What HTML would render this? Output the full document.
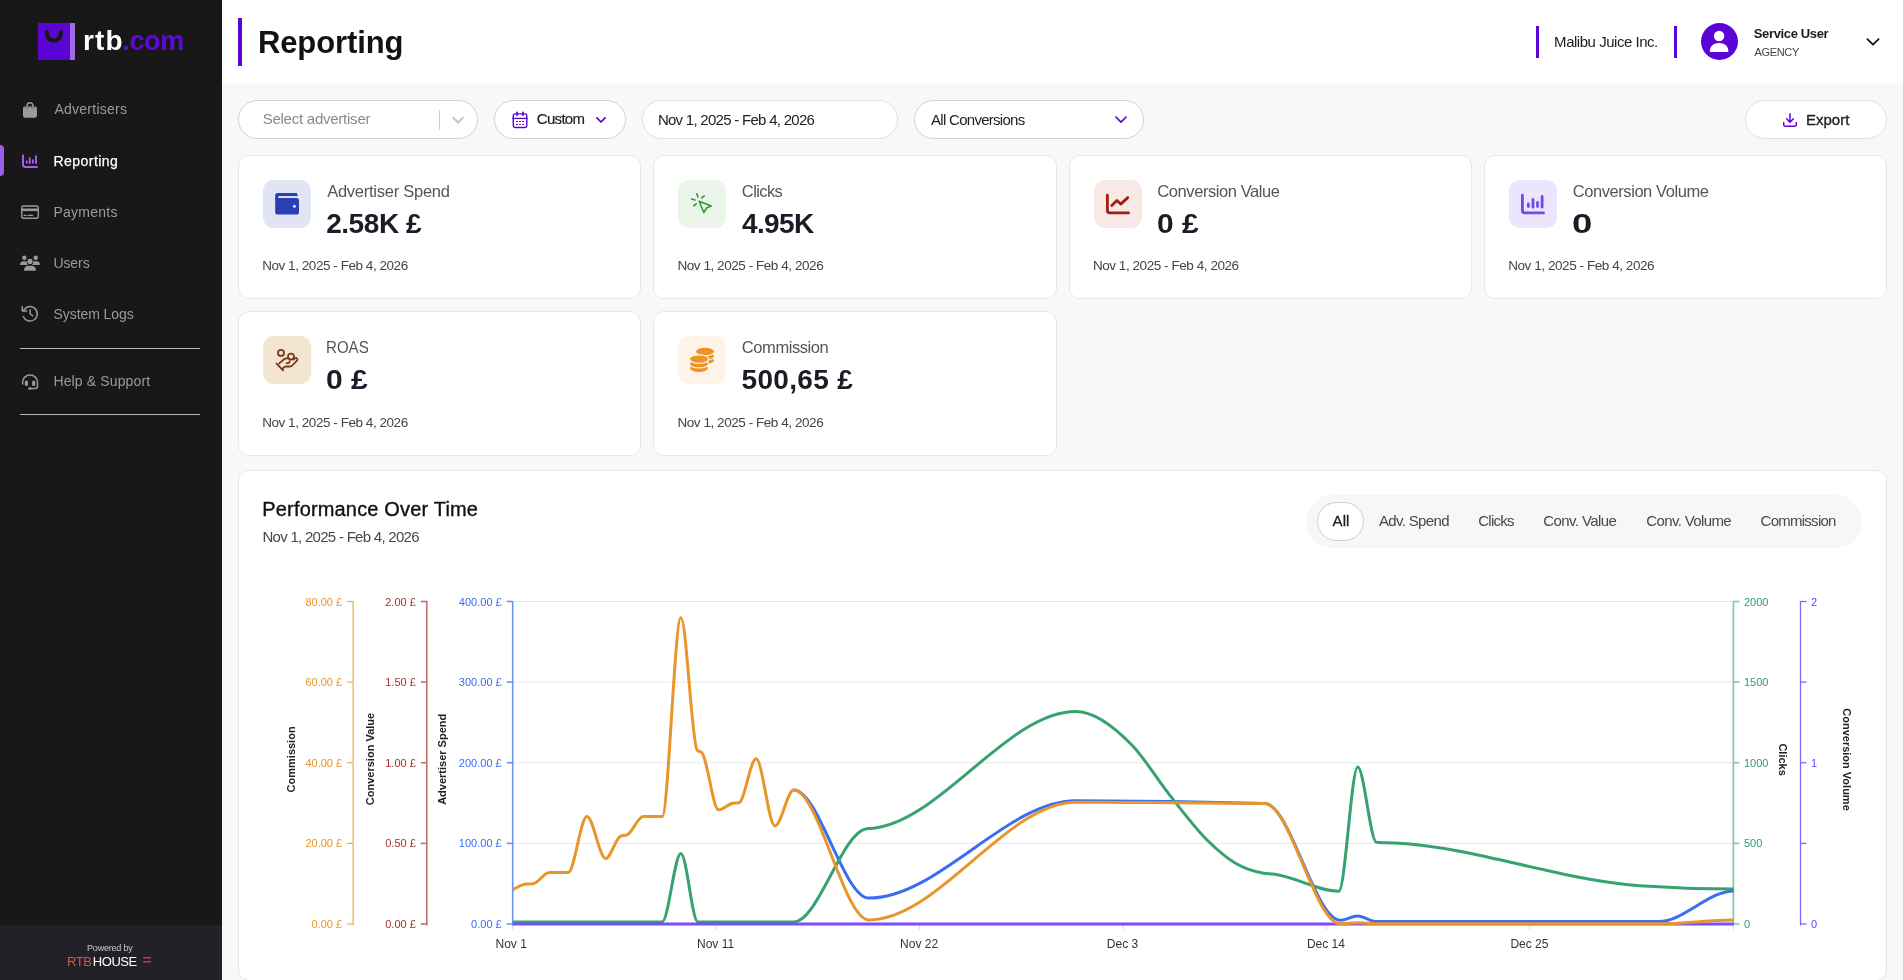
<!DOCTYPE html>
<html lang="en">
<head>
<meta charset="utf-8">
<title>Reporting - rtb.com</title>
<style>
*{box-sizing:border-box;margin:0;padding:0}
html,body{width:1903px;height:980px;overflow:hidden;background:#f8f8f8;font-family:"Liberation Sans",sans-serif}
#app{position:relative;width:1903px;height:980px;overflow:hidden;background:#f8f8f8}
.abs{position:absolute}
.t{position:absolute;white-space:pre;display:block}
.sidebar{position:absolute;left:0;top:0;width:222px;height:980px;background:#181818}
.sidebar .foot{position:absolute;left:0;top:925px;width:222px;height:55px;background:#212127}
.sidebar .active{position:absolute;left:-4px;top:145px;width:8px;height:31px;border-radius:4px;background:#9e5ee8}
.sidebar hr{position:absolute;left:20px;width:180px;height:1px;border:0;background:#b9b9b9}
.topbar{position:absolute;left:222px;top:0;width:1681px;height:84px;background:#fff}
.vbar{position:absolute;background:#5b04d6}
.pill{position:absolute;top:100px;height:39px;border:1px solid #d2d2d2;border-radius:20px;background:#fff}
.card{position:absolute;background:#fff;border:1px solid #e6e8e8;border-radius:11px}
.ibox{position:absolute;left:24px;top:24px;width:48px;height:48px;border-radius:11px}
.tabs{position:absolute;left:1306px;top:495px;width:556px;height:53px;border-radius:27px;background:#f6f7f7}
.tab-on{position:absolute;left:1317px;top:502px;width:47px;height:39px;border-radius:20px;background:#fff;border:1px solid #cfcfcf}
svg{position:absolute;overflow:visible}
svg.chart{left:0;top:0;will-change:transform}
</style>
</head>
<body>
<div id="app">

<!-- ============ SIDEBAR ============ -->
<aside class="sidebar">
  <svg style="left:0;top:0" width="222" height="90" viewBox="0 0 222 90">
    <rect x="38" y="23" width="37" height="37" fill="#5b04d6"/>
    <rect x="70" y="23" width="5" height="37" fill="#a06ae6"/>
    <path d="M46.9 32.2V33.7A6.95 6.95 0 0 0 60.8 33.7V32.2" fill="none" stroke="#181818" stroke-width="4.3" stroke-linecap="round"/>
  </svg>
  <div class="active"></div>
  <svg id="navicons" style="left:0;top:0" width="222" height="420" viewBox="0 0 222 420">
    
    <!-- bag -->
    <path d="M24.6 106.6H35.4A1.6 1.6 0 0 1 37 108.2V115.4A2.4 2.4 0 0 1 34.6 117.8H25.4A2.4 2.4 0 0 1 23 115.4V108.2A1.6 1.6 0 0 1 24.6 106.6Z" fill="#9a9a9a"/>
    <path d="M27.1 109.4V105.6A2.9 2.9 0 0 1 32.9 105.6V109.4" fill="none" stroke="#9a9a9a" stroke-width="1.5" stroke-linecap="round"/>
    <path d="M26.1 108.4V107.2M28.1 108.4V107.2M31.9 108.4V107.2M33.9 108.4V107.2" stroke="#181818" stroke-width="0.5"/>
    <!-- reporting chart -->
    <path d="M23 155.3V164.6A2.4 2.4 0 0 0 25.4 167H37" fill="none" stroke="#a65cf0" stroke-width="2" stroke-linecap="round"/>
    <path d="M26.8 161.4V162.8M29.8 158.2V163M32.9 160.2V162.8M36 156.1V163.1" fill="none" stroke="#a65cf0" stroke-width="1.9" stroke-linecap="round"/>
    <!-- credit card -->
    <rect x="21.7" y="206" width="16.6" height="12.3" rx="2" fill="none" stroke="#9a9a9a" stroke-width="1.4"/>
    <rect x="21.7" y="208.5" width="16.6" height="2.6" fill="#9a9a9a"/>
    <path d="M24.2 215.4H26.2M28.2 215.4H32.6" stroke="#9a9a9a" stroke-width="1.4" stroke-linecap="round"/>
    <!-- users -->
    <circle cx="24.3" cy="257.7" r="2.2" fill="#9a9a9a"/>
    <circle cx="35.7" cy="257.7" r="2.2" fill="#9a9a9a"/>
    <circle cx="30" cy="261.4" r="2.6" fill="#9a9a9a"/>
    <path d="M20 264.6C20 262.7 21.4 261.3 23.2 261.3H25.4C25.9 261.3 26.4 261.4 26.8 261.6C26.7 263 27.2 264.1 28 264.9H20.6C20.3 264.9 20 264.8 20 264.6Z" fill="#9a9a9a"/>
    <path d="M40 264.6C40 262.7 38.6 261.3 36.8 261.3H34.6C34.1 261.3 33.6 261.4 33.2 261.6C33.3 263 32.8 264.1 32 264.9H39.4C39.7 264.9 40 264.8 40 264.6Z" fill="#9a9a9a"/>
    <path d="M24 270C24 267.5 25.9 265.7 28.2 265.7H31.8C34.1 265.7 36 267.5 36 270C36 270.4 35.7 270.7 35.3 270.7H24.7C24.3 270.7 24 270.4 24 270Z" fill="#9a9a9a"/>
    <!-- history -->
    <path d="M23.6 310.6A7.2 7.2 0 1 1 23.3 316.4" fill="none" stroke="#9a9a9a" stroke-width="1.5" stroke-linecap="round"/>
    <path d="M22.3 306.6V310.9H26.6" fill="none" stroke="#9a9a9a" stroke-width="1.5" stroke-linecap="round" stroke-linejoin="round"/>
    <path d="M30.2 309.9V314L32.8 315.9" fill="none" stroke="#9a9a9a" stroke-width="1.5" stroke-linecap="round" stroke-linejoin="round"/>
    <!-- headset -->
    <path d="M22.6 384V382.4A7.45 7.45 0 0 1 37.5 382.4V385.9A2.6 2.6 0 0 1 34.9 388.5H31.4" fill="none" stroke="#9a9a9a" stroke-width="1.5" stroke-linecap="round"/>
    <rect x="24.8" y="380.4" width="3.2" height="5.7" rx="1.5" fill="#9a9a9a"/>
    <rect x="32.1" y="380.4" width="3.2" height="5.7" rx="1.5" fill="#9a9a9a"/>
    <ellipse cx="29.9" cy="388.5" rx="1.9" ry="1.3" fill="#9a9a9a"/>

  </svg>
  <hr style="top:348px">
  <hr style="top:414px">
  <div class="foot"></div>
  <svg style="left:0;top:925px" width="222" height="55" viewBox="0 925 222 55">
    <rect x="143.2" y="957.3" width="7.8" height="1.1" fill="#e2533c"/>
    <rect x="143.2" y="961.3" width="7.8" height="1.1" fill="#e2533c"/>
  </svg>
</aside>

<!-- ============ TOP BAR ============ -->
<header class="topbar">
  <div class="vbar" style="left:16px;top:18px;width:4px;height:48px"></div>
  <div class="vbar" style="left:1314px;top:26px;width:3px;height:32px"></div>
  <div class="vbar" style="left:1452px;top:26px;width:3px;height:32px"></div>
  <svg style="left:1479px;top:23px" width="37" height="37" viewBox="0 0 37 37">
    <circle cx="18.5" cy="18.5" r="18.5" fill="#5b04d6"/>
    <circle cx="18.1" cy="13.05" r="5.2" fill="#fff"/>
    <path d="M8.8 28.3C8.8 23.4 12.6 20 18.1 20C23.6 20 27.4 23.4 27.4 28.3Q27.4 29 26.7 29H9.5Q8.8 29 8.8 28.3Z" fill="#fff"/>
  </svg>
  <svg style="left:1644px;top:37px" width="14" height="10" viewBox="0 0 14 10">
    <path d="M1.4 2.1L7 7.7 12.6 2.1" fill="none" stroke="#111" stroke-width="1.7" stroke-linecap="round" stroke-linejoin="round"/>
  </svg>
</header>

<!-- ============ FILTERS ============ -->
<div class="pill" style="left:238px;width:240px"></div>
<div class="abs" style="left:439px;top:109.5px;width:1px;height:20px;background:#cfcfcf"></div>
<svg style="left:451px;top:115px" width="14" height="11" viewBox="0 0 14 11">
  <path d="M2.2 2.8L7 7.6 11.8 2.8" fill="none" stroke="#c4c4c4" stroke-width="2.1" stroke-linecap="round" stroke-linejoin="round"/>
</svg>
<div class="pill" style="left:494px;width:132px"></div>
<svg style="left:512px;top:111px" width="16" height="18" viewBox="0 0 16 18">
  
  <rect x="1.3" y="2.9" width="13.5" height="13.6" rx="1.9" fill="none" stroke="#5b04d6" stroke-width="1.4"/>
  <path d="M0.4 7.4H15.6" stroke="#5b04d6" stroke-width="1.3"/>
  <path d="M5 1.4V4.2M11 1.4V4.2" stroke="#5b04d6" stroke-width="1.7" stroke-linecap="round"/>
  <path d="M4.5 10.5H5.5M7.5 10.5H8.5M10.5 10.5H11.5M4.5 13.5H5.5M7.5 13.5H8.5M10.5 13.5H11.5" stroke="#5b04d6" stroke-width="1.15" stroke-linecap="round"/>

</svg>
<svg style="left:595px;top:116px" width="12" height="9" viewBox="0 0 12 9">
  <path d="M1.9 1.9L6 6 10.1 1.9" fill="none" stroke="#5b04d6" stroke-width="1.7" stroke-linecap="round" stroke-linejoin="round"/>
</svg>
<div class="pill" style="left:642px;width:256px;border-color:#e0e0e0"></div>
<div class="pill" style="left:914px;width:230px"></div>
<svg style="left:1114px;top:114.5px" width="14" height="10" viewBox="0 0 14 10">
  <path d="M1.9 2L7 7.1 12.1 2" fill="none" stroke="#5b04d6" stroke-width="1.7" stroke-linecap="round" stroke-linejoin="round"/>
</svg>
<div class="pill" style="left:1745px;width:142px;border-color:#dedede"></div>
<svg style="left:1782px;top:112px" width="16" height="16" viewBox="0 0 16 16">
  <path d="M8 1.8V10M4.6 6.8L8 10.2 11.4 6.8" fill="none" stroke="#5b04d6" stroke-width="1.5" stroke-linecap="round" stroke-linejoin="round"/>
  <path d="M1.7 10.6V12.4A1.8 1.8 0 0 0 3.5 14.2H12.5A1.8 1.8 0 0 0 14.3 12.4V10.6" fill="none" stroke="#5b04d6" stroke-width="1.5" stroke-linecap="round" stroke-linejoin="round"/>
</svg>

<!-- ============ CARDS ============ -->
<section class="card" style="left:238px;top:155px;width:403px;height:144px"><div class="ibox" style="background:#e1e4f2"></div></section>
<section class="card" style="left:653px;top:155px;width:404px;height:144px"><div class="ibox" style="background:#ebf5e9"></div></section>
<section class="card" style="left:1069px;top:155px;width:403px;height:144px"><div class="ibox" style="background:#f7e9e6"></div></section>
<section class="card" style="left:1484px;top:155px;width:403px;height:144px"><div class="ibox" style="background:#ebe6fd"></div></section>
<section class="card" style="left:238px;top:311px;width:403px;height:145px"><div class="ibox" style="background:#f2e5d2"></div></section>
<section class="card" style="left:653px;top:311px;width:404px;height:145px"><div class="ibox" style="background:#fef3e8"></div></section>
<svg id="cardicons" style="left:0;top:0" width="1903" height="460" viewBox="0 0 1903 460">
  
  <!-- wallet -->
  <path d="M275.2 198H296.4A2.6 2.6 0 0 1 299 200.6V212A2.6 2.6 0 0 1 296.4 214.6H277.8A2.6 2.6 0 0 1 275.2 212Z" fill="#2840b4"/>
  <path d="M275.2 199V195.7A2.6 2.6 0 0 1 277.8 193.1H296.9L297.9 196.3H278.4V199Z" fill="#2840b4"/>
  <path d="M279.3 197.15H297" stroke="#e1e4f2" stroke-width="1.7" stroke-linecap="round"/>
  <circle cx="294.4" cy="206.2" r="1.5" fill="#e1e4f2"/>
  <!-- click -->
  <path d="M699.2 201.3L711.2 205.9L706.6 207.9L703.8 212.5Z" fill="none" stroke="#2f9a2f" stroke-width="1.6" stroke-linejoin="round"/>
  <path d="M696.9 193.8L697.9 197M704.2 195.8L701.8 197.9M691.8 198.9L695 199.9M696.2 203.8L693.8 205.9" fill="none" stroke="#2f9a2f" stroke-width="1.6" stroke-linecap="round"/>
  <!-- chart line -->
  <path d="M1107.4 195.2V210.5A2.4 2.4 0 0 0 1109.8 212.9H1128.5" fill="none" stroke="#a02010" stroke-width="2.8" stroke-linecap="round"/>
  <path d="M1111.8 205.4L1116.9 200.4L1120.7 204.1L1127.8 197.6" fill="none" stroke="#a02010" stroke-width="2.8" stroke-linecap="round" stroke-linejoin="round"/>
  <!-- bars -->
  <path d="M1522.4 195.2V210.5A2.4 2.4 0 0 0 1524.8 212.9H1543.5" fill="none" stroke="#7048e8" stroke-width="2.8" stroke-linecap="round"/>
  <path d="M1528.4 204V206.6M1533 199.4V207.2M1537.5 202.4V206.6M1542.1 196.4V207.2" fill="none" stroke="#7048e8" stroke-width="2.8" stroke-linecap="round"/>
  <!-- roas hand coin -->
  <circle cx="281" cy="352.9" r="3.0" fill="none" stroke="#7a3b14" stroke-width="1.8"/>
  <circle cx="291" cy="356.6" r="3.0" fill="none" stroke="#7a3b14" stroke-width="1.8"/>
  <path d="M276.6 363.7L283 370.4" fill="none" stroke="#7a3b14" stroke-width="1.9" stroke-linecap="round"/>
  <path d="M279.2 363.4L284.4 359C285 358.5 285.7 358.3 286.5 358.3H288.2" fill="none" stroke="#7a3b14" stroke-width="1.8" stroke-linecap="round"/>
  <path d="M286.6 363.1H288.2A1.5 1.5 0 0 0 289.6 361.2" fill="none" stroke="#7a3b14" stroke-width="1.8" stroke-linecap="round"/>
  <path d="M282.8 368.5L284.2 367.1C284.8 366.6 285.3 366.5 286 366.5H290C291 366.5 291.7 366.2 292.3 365.5L297.2 360.3A1.55 1.55 0 0 0 295 358.2L293.6 359.5" fill="none" stroke="#7a3b14" stroke-width="1.8" stroke-linecap="round" stroke-linejoin="round"/>
  <!-- coins -->
  <ellipse cx="705" cy="360.50" rx="9.6" ry="4.3" fill="#f09326" stroke="#fef3e8" stroke-width="1.2"/><ellipse cx="705" cy="355.95" rx="9.6" ry="4.3" fill="#f09326" stroke="#fef3e8" stroke-width="1.2"/><ellipse cx="705" cy="351.40" rx="9.6" ry="4.3" fill="#f09326" stroke="#fef3e8" stroke-width="1.2"/>
  <ellipse cx="699" cy="368.20" rx="9.6" ry="4.3" fill="#f09326" stroke="#fef3e8" stroke-width="1.2"/><ellipse cx="699" cy="363.65" rx="9.6" ry="4.3" fill="#f09326" stroke="#fef3e8" stroke-width="1.2"/><ellipse cx="699" cy="359.10" rx="9.6" ry="4.3" fill="#f09326" stroke="#fef3e8" stroke-width="1.2"/>

</svg>

<!-- ============ CHART CARD ============ -->
<section class="card" style="left:238px;top:470px;width:1649px;height:511px"></section>
<div class="tabs"></div>
<div class="tab-on"></div>

<svg class="chart" width="1903" height="980" viewBox="0 0 1903 980" font-family="Liberation Sans, sans-serif">
<defs><clipPath id="plotclip"><rect x="512.7" y="590" width="1221.0" height="345"/></clipPath></defs>
<line x1="512.7" x2="1733.3" y1="601.5" y2="601.5" stroke="#e5e7eb" stroke-width="1"/>
<line x1="512.7" x2="1733.3" y1="682.1" y2="682.1" stroke="#e5e7eb" stroke-width="1"/>
<line x1="512.7" x2="1733.3" y1="762.75" y2="762.75" stroke="#e5e7eb" stroke-width="1"/>
<line x1="512.7" x2="1733.3" y1="843.4" y2="843.4" stroke="#e5e7eb" stroke-width="1"/>
<line x1="512.7" x2="512.7" y1="924" y2="929.5" stroke="#d5d5d5" stroke-width="1"/>
<line x1="716.1" x2="716.1" y1="924" y2="929.5" stroke="#d5d5d5" stroke-width="1"/>
<line x1="919.6" x2="919.6" y1="924" y2="929.5" stroke="#d5d5d5" stroke-width="1"/>
<line x1="1123.0" x2="1123.0" y1="924" y2="929.5" stroke="#d5d5d5" stroke-width="1"/>
<line x1="1326.4" x2="1326.4" y1="924" y2="929.5" stroke="#d5d5d5" stroke-width="1"/>
<line x1="1529.9" x2="1529.9" y1="924" y2="929.5" stroke="#d5d5d5" stroke-width="1"/>
<line x1="1733.3" x2="1733.3" y1="924" y2="929.5" stroke="#d5d5d5" stroke-width="1"/>
<text x="511.2" y="947.7" font-size="12" fill="#333" text-anchor="middle">Nov 1</text>
<text x="715.6" y="947.7" font-size="12" fill="#333" text-anchor="middle">Nov 11</text>
<text x="919.1" y="947.7" font-size="12" fill="#333" text-anchor="middle">Nov 22</text>
<text x="1122.5" y="947.7" font-size="12" fill="#333" text-anchor="middle">Dec 3</text>
<text x="1325.9" y="947.7" font-size="12" fill="#333" text-anchor="middle">Dec 14</text>
<text x="1529.4" y="947.7" font-size="12" fill="#333" text-anchor="middle">Dec 25</text>
<line x1="353.1" x2="353.1" y1="601.0" y2="925.5" stroke="#eaa84a" stroke-width="1.1" opacity="1.0"/>
<line x1="347.1" x2="353.1" y1="601.5" y2="601.5" stroke="#eaa84a" stroke-width="1.1" opacity="1.0"/>
<text x="342.1" y="605.5" font-size="11" fill="#e8962a" text-anchor="end">80.00 £</text>
<line x1="347.1" x2="353.1" y1="682.1" y2="682.1" stroke="#eaa84a" stroke-width="1.1" opacity="1.0"/>
<text x="342.1" y="686.1" font-size="11" fill="#e8962a" text-anchor="end">60.00 £</text>
<line x1="347.1" x2="353.1" y1="762.75" y2="762.75" stroke="#eaa84a" stroke-width="1.1" opacity="1.0"/>
<text x="342.1" y="766.75" font-size="11" fill="#e8962a" text-anchor="end">40.00 £</text>
<line x1="347.1" x2="353.1" y1="843.4" y2="843.4" stroke="#eaa84a" stroke-width="1.1" opacity="1.0"/>
<text x="342.1" y="847.4" font-size="11" fill="#e8962a" text-anchor="end">20.00 £</text>
<line x1="347.1" x2="353.1" y1="924.0" y2="924.0" stroke="#eaa84a" stroke-width="1.1" opacity="1.0"/>
<text x="342.1" y="928.0" font-size="11" fill="#e8962a" text-anchor="end">0.00 £</text>
<line x1="426.8" x2="426.8" y1="601.0" y2="925.5" stroke="#c4706a" stroke-width="1.6" opacity="1.0"/>
<line x1="420.8" x2="426.8" y1="601.5" y2="601.5" stroke="#c4706a" stroke-width="1.6" opacity="1.0"/>
<text x="415.8" y="605.5" font-size="11" fill="#a8322a" text-anchor="end">2.00 £</text>
<line x1="420.8" x2="426.8" y1="682.1" y2="682.1" stroke="#c4706a" stroke-width="1.6" opacity="1.0"/>
<text x="415.8" y="686.1" font-size="11" fill="#a8322a" text-anchor="end">1.50 £</text>
<line x1="420.8" x2="426.8" y1="762.75" y2="762.75" stroke="#c4706a" stroke-width="1.6" opacity="1.0"/>
<text x="415.8" y="766.75" font-size="11" fill="#a8322a" text-anchor="end">1.00 £</text>
<line x1="420.8" x2="426.8" y1="843.4" y2="843.4" stroke="#c4706a" stroke-width="1.6" opacity="1.0"/>
<text x="415.8" y="847.4" font-size="11" fill="#a8322a" text-anchor="end">0.50 £</text>
<line x1="420.8" x2="426.8" y1="924.0" y2="924.0" stroke="#c4706a" stroke-width="1.6" opacity="1.0"/>
<text x="415.8" y="928.0" font-size="11" fill="#a8322a" text-anchor="end">0.00 £</text>
<line x1="512.7" x2="512.7" y1="601.0" y2="925.5" stroke="#6d92f7" stroke-width="1.6" opacity="1.0"/>
<line x1="506.70000000000005" x2="512.7" y1="601.5" y2="601.5" stroke="#6d92f7" stroke-width="1.6" opacity="1.0"/>
<text x="501.70000000000005" y="605.5" font-size="11" fill="#3b6cf4" text-anchor="end">400.00 £</text>
<line x1="506.70000000000005" x2="512.7" y1="682.1" y2="682.1" stroke="#6d92f7" stroke-width="1.6" opacity="1.0"/>
<text x="501.70000000000005" y="686.1" font-size="11" fill="#3b6cf4" text-anchor="end">300.00 £</text>
<line x1="506.70000000000005" x2="512.7" y1="762.75" y2="762.75" stroke="#6d92f7" stroke-width="1.6" opacity="1.0"/>
<text x="501.70000000000005" y="766.75" font-size="11" fill="#3b6cf4" text-anchor="end">200.00 £</text>
<line x1="506.70000000000005" x2="512.7" y1="843.4" y2="843.4" stroke="#6d92f7" stroke-width="1.6" opacity="1.0"/>
<text x="501.70000000000005" y="847.4" font-size="11" fill="#3b6cf4" text-anchor="end">100.00 £</text>
<line x1="506.70000000000005" x2="512.7" y1="924.0" y2="924.0" stroke="#6d92f7" stroke-width="1.6" opacity="1.0"/>
<text x="501.70000000000005" y="928.0" font-size="11" fill="#3b6cf4" text-anchor="end">0.00 £</text>
<line x1="1733.4" x2="1733.4" y1="601.0" y2="925.5" stroke="#8fcbab" stroke-width="1.8" opacity="1.0"/>
<line x1="1733.4" x2="1739.4" y1="601.5" y2="601.5" stroke="#8fcbab" stroke-width="1.8" opacity="1.0"/>
<text x="1743.9" y="605.5" font-size="11" fill="#2f9e69" text-anchor="start">2000</text>
<line x1="1733.4" x2="1739.4" y1="682.1" y2="682.1" stroke="#8fcbab" stroke-width="1.8" opacity="1.0"/>
<text x="1743.9" y="686.1" font-size="11" fill="#2f9e69" text-anchor="start">1500</text>
<line x1="1733.4" x2="1739.4" y1="762.75" y2="762.75" stroke="#8fcbab" stroke-width="1.8" opacity="1.0"/>
<text x="1743.9" y="766.75" font-size="11" fill="#2f9e69" text-anchor="start">1000</text>
<line x1="1733.4" x2="1739.4" y1="843.4" y2="843.4" stroke="#8fcbab" stroke-width="1.8" opacity="1.0"/>
<text x="1743.9" y="847.4" font-size="11" fill="#2f9e69" text-anchor="start">500</text>
<line x1="1733.4" x2="1739.4" y1="924.0" y2="924.0" stroke="#8fcbab" stroke-width="1.8" opacity="1.0"/>
<text x="1743.9" y="928.0" font-size="11" fill="#2f9e69" text-anchor="start">0</text>
<line x1="1800.5" x2="1800.5" y1="601.0" y2="925.5" stroke="#8a63ff" stroke-width="1.3" opacity="1.0"/>
<line x1="1800.5" x2="1806.5" y1="601.5" y2="601.5" stroke="#8a63ff" stroke-width="1.3" opacity="1.0"/>
<text x="1811.0" y="605.5" font-size="11" fill="#6f3cff" text-anchor="start">2</text>
<line x1="1800.5" x2="1806.5" y1="682.1" y2="682.1" stroke="#8a63ff" stroke-width="1.3" opacity="1.0"/>
<line x1="1800.5" x2="1806.5" y1="762.75" y2="762.75" stroke="#8a63ff" stroke-width="1.3" opacity="1.0"/>
<text x="1811.0" y="766.75" font-size="11" fill="#6f3cff" text-anchor="start">1</text>
<line x1="1800.5" x2="1806.5" y1="843.4" y2="843.4" stroke="#8a63ff" stroke-width="1.3" opacity="1.0"/>
<line x1="1800.5" x2="1806.5" y1="924.0" y2="924.0" stroke="#8a63ff" stroke-width="1.3" opacity="1.0"/>
<text x="1811.0" y="928.0" font-size="11" fill="#6f3cff" text-anchor="start">0</text>
<text transform="translate(294.6,759.4) rotate(-90)" font-size="11" font-weight="700" fill="#222" text-anchor="middle">Commission</text>
<text transform="translate(374.3,759.0) rotate(-90)" font-size="11" font-weight="700" fill="#222" text-anchor="middle">Conversion Value</text>
<text transform="translate(445.6,759.3) rotate(-90)" font-size="11" font-weight="700" fill="#222" text-anchor="middle">Advertiser Spend</text>
<text transform="translate(1779.4,759.6) rotate(90)" font-size="11" font-weight="700" fill="#222" text-anchor="middle">Clicks</text>
<text transform="translate(1842.7,759.5) rotate(90)" font-size="11" font-weight="700" fill="#222" text-anchor="middle">Conversion Volume</text>
<path clip-path="url(#plotclip)" d="M793.70,790.00C818.77,790.00 843.83,898.10 868.90,898.10C937.83,898.10 1006.77,800.70 1075.70,800.70C1138.81,800.70 1201.91,801.65 1265.02,803.55C1290.08,804.30 1315.15,920.20 1340.22,920.20C1346.04,920.20 1351.87,916.00 1357.70,916.00C1363.97,916.00 1370.23,921.60 1376.50,921.60C1470.50,921.60 1564.50,921.60 1658.50,921.60C1683.57,921.60 1708.63,890.90 1733.70,890.90C1734.33,890.90 1734.95,890.90 1735.58,890.90" fill="none" stroke="#3b6cf4" stroke-width="3.0" stroke-linejoin="round" stroke-linecap="butt"/>
<path clip-path="url(#plotclip)" d="M512.70,921.90C562.50,921.90 612.30,921.90 662.10,921.90C668.37,921.90 674.63,853.40 680.90,853.40C686.54,853.40 692.18,921.90 697.82,921.90C729.78,921.90 761.74,921.90 793.70,921.90C817.95,921.90 842.20,831.90 866.46,828.80C868.02,828.60 869.59,828.62 871.16,828.50C939.34,823.37 1007.52,711.50 1075.70,711.50C1094.50,711.50 1113.30,725.85 1132.10,745.30C1144.63,758.26 1157.17,779.27 1169.70,795.10C1182.23,810.93 1194.77,828.00 1207.30,840.30C1216.70,849.52 1226.10,857.82 1235.50,863.30C1244.90,868.78 1254.30,871.78 1263.70,873.20C1266.83,873.68 1269.97,873.66 1273.10,874.00C1295.03,876.35 1316.97,891.20 1338.90,891.20C1345.17,891.20 1351.43,767.10 1357.70,767.10C1363.97,767.10 1370.23,841.67 1376.50,842.20C1382.77,842.73 1389.03,842.67 1395.30,843.00C1476.77,847.24 1558.23,879.98 1639.70,885.70C1671.03,887.90 1702.37,889.00 1733.70,889.00C1734.33,889.00 1734.95,889.00 1735.58,889.00" fill="none" stroke="#36a26f" stroke-width="3.0" stroke-linejoin="round" stroke-linecap="butt"/>
<path clip-path="url(#plotclip)" d="M512.70,924.00L1733.70,924.00" fill="none" stroke="#a8322a" stroke-width="2.0" stroke-linejoin="round" stroke-linecap="butt"/>
<path clip-path="url(#plotclip)" d="M512.70,924.00L1733.70,924.00" fill="none" stroke="#7c4dff" stroke-width="3.0" stroke-linejoin="round" stroke-linecap="butt"/>
<path clip-path="url(#plotclip)" d="M512.70,889.70C517.25,886.99 521.81,884.29 526.36,884.00C528.49,883.87 530.63,883.93 532.76,883.80C538.27,883.45 543.79,872.60 549.30,872.60C555.57,872.60 561.83,872.60 568.10,872.60C574.37,872.60 580.63,816.60 586.90,816.60C593.17,816.60 599.43,858.60 605.70,858.60C610.71,858.60 615.73,837.67 620.74,836.00C622.75,835.33 624.75,835.67 626.76,835.00C632.27,833.17 637.79,816.60 643.30,816.60C649.57,816.60 655.83,816.60 662.10,816.60C668.37,816.60 674.63,617.80 680.90,617.80C686.35,617.80 691.80,744.50 697.26,750.30C698.82,751.97 700.39,751.13 701.96,752.80C707.47,758.67 712.99,809.80 718.50,809.80C723.33,809.80 728.15,803.86 732.98,803.20C734.92,802.93 736.86,803.07 738.80,802.80C744.57,802.01 750.33,758.80 756.10,758.80C762.37,758.80 768.63,825.90 774.90,825.90C781.17,825.90 787.43,790.00 793.70,790.00C818.77,790.00 843.83,920.00 868.90,920.00C937.83,920.00 1006.77,802.20 1075.70,802.20C1138.81,802.20 1201.91,802.65 1265.02,803.55C1290.08,803.91 1315.15,923.80 1340.22,923.80C1346.04,923.80 1351.87,922.80 1357.70,922.80C1363.97,922.80 1370.23,923.80 1376.50,923.80C1470.50,923.80 1564.50,923.80 1658.50,923.80C1683.57,923.80 1708.63,920.00 1733.70,920.00C1734.33,920.00 1734.95,920.00 1735.58,920.00" fill="none" stroke="#e8962a" stroke-width="3.0" stroke-linejoin="round" stroke-linecap="butt"/>
</svg>

<div id="textlayer" style="position:absolute;left:0;top:0;width:1903px;height:980px;will-change:transform">
<span class="t" style="left:83.12px;top:27.30px;font-size:28px;line-height:28px;font-weight:700;color:#fff;letter-spacing:1.093px;">rtb</span>
<span class="t" style="left:122.25px;top:28.14px;font-size:27px;line-height:27px;font-weight:700;color:#5f08dc;letter-spacing:-0.328px;">.com</span>
<span class="t" style="left:54.44px;top:102.15px;font-size:14px;line-height:14px;font-weight:400;color:#9a9a9a;letter-spacing:0.252px;">Advertisers</span>
<span class="t" style="left:53.52px;top:154.25px;font-size:14px;line-height:14px;font-weight:400;color:#fff;letter-spacing:0.460px;-webkit-text-stroke:0.25px #fff;">Reporting</span>
<span class="t" style="left:53.42px;top:205.05px;font-size:14px;line-height:14px;font-weight:400;color:#9a9a9a;letter-spacing:0.263px;">Payments</span>
<span class="t" style="left:53.40px;top:256.05px;font-size:14px;line-height:14px;font-weight:400;color:#9a9a9a;letter-spacing:-0.077px;">Users</span>
<span class="t" style="left:53.54px;top:306.85px;font-size:14px;line-height:14px;font-weight:400;color:#9a9a9a;letter-spacing:-0.068px;">System Logs</span>
<span class="t" style="left:53.42px;top:373.95px;font-size:14px;line-height:14px;font-weight:400;color:#9a9a9a;letter-spacing:0.138px;">Help &amp; Support</span>
<span class="t" style="left:87.07px;top:944.28px;font-size:9px;line-height:9px;font-weight:400;color:#c9c9c9;letter-spacing:-0.211px;">Powered by</span>
<span class="t" style="left:67.10px;top:955.20px;font-size:13px;line-height:13px;font-weight:400;color:#ffffff;letter-spacing:-0.430px;"><span style="color:#e2533c">RTB</span><span style="margin-left:1.2px">HOUSE</span></span>
<span class="t" style="left:257.98px;top:27.36px;font-size:31px;line-height:31px;font-weight:700;color:#121212;letter-spacing:-0.120px;">Reporting</span>
<span class="t" style="left:1554.11px;top:33.50px;font-size:15px;line-height:15px;font-weight:400;color:#1d1d1d;letter-spacing:-0.471px;">Malibu Juice Inc.</span>
<span class="t" style="left:1753.71px;top:26.80px;font-size:13px;line-height:13px;font-weight:700;color:#1a1a1a;letter-spacing:-0.346px;">Service User</span>
<span class="t" style="left:1754.59px;top:46.59px;font-size:11px;line-height:11px;font-weight:400;color:#444;letter-spacing:-0.364px;">AGENCY</span>
<span class="t" style="left:262.67px;top:110.90px;font-size:15px;line-height:15px;font-weight:400;color:#8a8a8a;letter-spacing:-0.244px;">Select advertiser</span>
<span class="t" style="left:536.82px;top:110.90px;font-size:15px;line-height:15px;font-weight:400;color:#1f1f1f;letter-spacing:-0.701px;-webkit-text-stroke:0.2px #1f1f1f;">Custom</span>
<span class="t" style="left:657.89px;top:112.30px;font-size:15px;line-height:15px;font-weight:400;color:#222;letter-spacing:-0.721px;">Nov 1, 2025 - Feb 4, 2026</span>
<span class="t" style="left:931.09px;top:111.80px;font-size:15px;line-height:15px;font-weight:400;color:#222;letter-spacing:-0.721px;">All Conversions</span>
<span class="t" style="left:1806.09px;top:111.60px;font-size:15px;line-height:15px;font-weight:400;color:#1f1f1f;letter-spacing:-0.025px;-webkit-text-stroke:0.35px #1f1f1f;">Export</span>
<span class="t" style="left:327.14px;top:183.03px;font-size:16.5px;line-height:16.5px;font-weight:400;color:#555;letter-spacing:-0.248px;">Advertiser Spend</span>
<span class="t" style="left:326.16px;top:209.50px;font-size:28px;line-height:28px;font-weight:700;color:#1c1c28;letter-spacing:-0.444px;">2.58K £</span>
<span class="t" style="left:262.17px;top:258.57px;font-size:13.5px;line-height:13.5px;font-weight:400;color:#444;letter-spacing:-0.451px;">Nov 1, 2025 - Feb 4, 2026</span>
<span class="t" style="left:741.87px;top:183.03px;font-size:16.5px;line-height:16.5px;font-weight:400;color:#555;letter-spacing:-0.615px;">Clicks</span>
<span class="t" style="left:741.97px;top:209.50px;font-size:28px;line-height:28px;font-weight:700;color:#1c1c28;letter-spacing:-0.645px;">4.95K</span>
<span class="t" style="left:677.40px;top:258.57px;font-size:13.5px;line-height:13.5px;font-weight:400;color:#444;letter-spacing:-0.442px;">Nov 1, 2025 - Feb 4, 2026</span>
<span class="t" style="left:1157.32px;top:183.03px;font-size:16.5px;line-height:16.5px;font-weight:400;color:#555;letter-spacing:-0.421px;">Conversion Value</span>
<span class="t" style="left:1156.98px;top:209.50px;font-size:28px;line-height:28px;font-weight:700;color:#1c1c28;letter-spacing:0.000px;transform:scaleX(1.0704);transform-origin:0 0;">0 £</span>
<span class="t" style="left:1092.88px;top:258.57px;font-size:13.5px;line-height:13.5px;font-weight:400;color:#444;letter-spacing:-0.442px;">Nov 1, 2025 - Feb 4, 2026</span>
<span class="t" style="left:1572.71px;top:183.03px;font-size:16.5px;line-height:16.5px;font-weight:400;color:#555;letter-spacing:-0.429px;">Conversion Volume</span>
<span class="t" style="left:1571.83px;top:209.50px;font-size:28px;line-height:28px;font-weight:700;color:#1c1c28;letter-spacing:0.000px;transform:scaleX(1.3068);transform-origin:0 0;">0</span>
<span class="t" style="left:1508.24px;top:258.57px;font-size:13.5px;line-height:13.5px;font-weight:400;color:#444;letter-spacing:-0.438px;">Nov 1, 2025 - Feb 4, 2026</span>
<span class="t" style="left:326.23px;top:339.23px;font-size:16.5px;line-height:16.5px;font-weight:400;color:#555;letter-spacing:0.000px;transform:scaleX(0.9134);transform-origin:0 0;">ROAS</span>
<span class="t" style="left:325.79px;top:366.10px;font-size:28px;line-height:28px;font-weight:700;color:#1c1c28;letter-spacing:0.000px;transform:scaleX(1.0733);transform-origin:0 0;">0 £</span>
<span class="t" style="left:262.17px;top:415.57px;font-size:13.5px;line-height:13.5px;font-weight:400;color:#444;letter-spacing:-0.451px;">Nov 1, 2025 - Feb 4, 2026</span>
<span class="t" style="left:741.87px;top:339.23px;font-size:16.5px;line-height:16.5px;font-weight:400;color:#555;letter-spacing:-0.440px;">Commission</span>
<span class="t" style="left:741.47px;top:366.10px;font-size:28px;line-height:28px;font-weight:700;color:#1c1c28;letter-spacing:0.338px;">500,65 £</span>
<span class="t" style="left:677.40px;top:415.57px;font-size:13.5px;line-height:13.5px;font-weight:400;color:#444;letter-spacing:-0.442px;">Nov 1, 2025 - Feb 4, 2026</span>
<span class="t" style="left:262.28px;top:498.67px;font-size:20px;line-height:20px;font-weight:400;color:#111;letter-spacing:0.170px;-webkit-text-stroke:0.35px #111;">Performance Over Time</span>
<span class="t" style="left:262.43px;top:529.00px;font-size:15px;line-height:15px;font-weight:400;color:#484848;letter-spacing:-0.713px;">Nov 1, 2025 - Feb 4, 2026</span>
<span class="t" style="left:1332.56px;top:513.10px;font-size:15px;line-height:15px;font-weight:400;color:#1c1c28;letter-spacing:0.101px;-webkit-text-stroke:0.3px #1c1c28;">All</span>
<span class="t" style="left:1378.98px;top:513.10px;font-size:15px;line-height:15px;font-weight:400;color:#484848;letter-spacing:-0.656px;">Adv. Spend</span>
<span class="t" style="left:1478.30px;top:513.10px;font-size:15px;line-height:15px;font-weight:400;color:#484848;letter-spacing:-0.778px;">Clicks</span>
<span class="t" style="left:1543.30px;top:513.10px;font-size:15px;line-height:15px;font-weight:400;color:#484848;letter-spacing:-0.588px;">Conv. Value</span>
<span class="t" style="left:1646.30px;top:513.10px;font-size:15px;line-height:15px;font-weight:400;color:#484848;letter-spacing:-0.631px;">Conv. Volume</span>
<span class="t" style="left:1760.61px;top:513.10px;font-size:15px;line-height:15px;font-weight:400;color:#484848;letter-spacing:-0.747px;">Commission</span>
</div>
</div>
</body>
</html>
